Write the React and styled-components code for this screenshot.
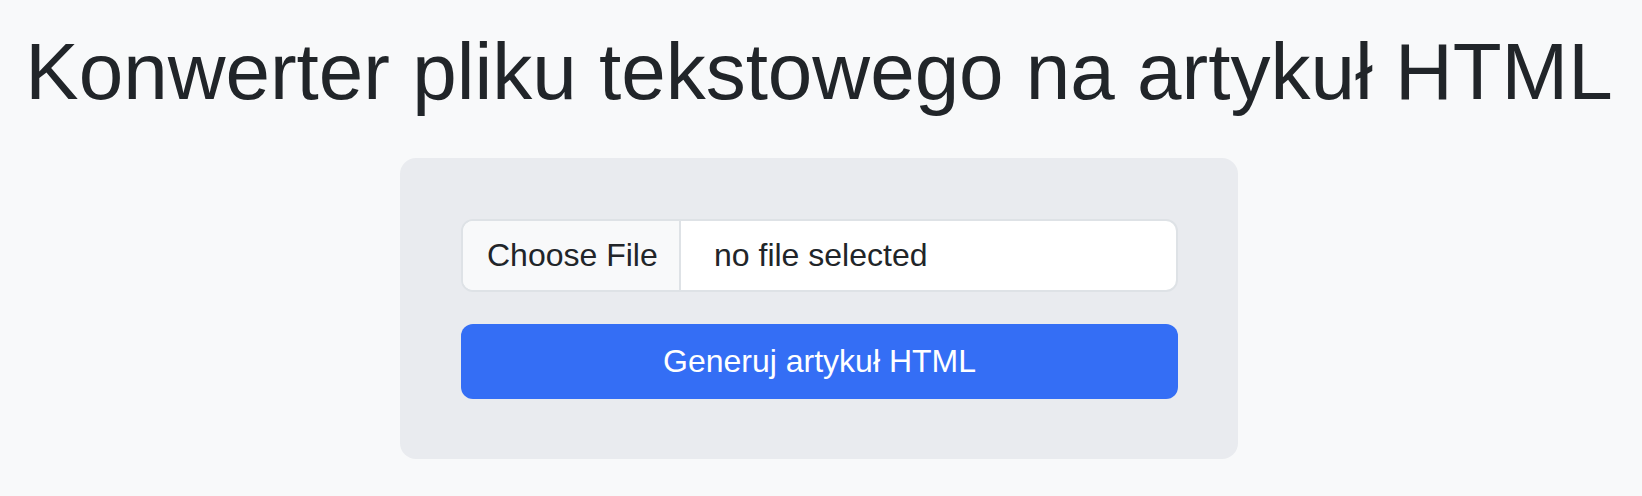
import React, { useState } from "react";
import styled, { createGlobalStyle } from "styled-components";

const GlobalStyle = createGlobalStyle`
  html, body {
    margin: 0;
    padding: 0;
    background-color: #f8f9fa;
    color: #212529;
    font-family: "Liberation Sans", Arial, Helvetica, sans-serif;
  }
`;

const Page = styled.div`
  display: flex;
  flex-direction: column;
  align-items: center;
  padding: 24px 4px 0 0;
`;

const Title = styled.h1`
  margin: 0 0 38px;
  font-size: 80px;
  font-weight: normal;
  line-height: 96px;
  text-align: center;
  white-space: nowrap;
  color: #212529;
`;

const Card = styled.form`
  box-sizing: border-box;
  width: 838px;
  padding: 61px 60px 60px 61px;
  background-color: #e9ebef;
  border-radius: 16px;
  display: flex;
  flex-direction: column;
  gap: 32px;
`;

const FileField = styled.label`
  box-sizing: border-box;
  display: flex;
  align-items: stretch;
  height: 73px;
  background-color: #ffffff;
  border: 2px solid #dee2e6;
  border-radius: 12px;
  overflow: hidden;
  font-size: 32px;
  white-space: nowrap;
  cursor: pointer;
`;

const HiddenInput = styled.input`
  display: none;
`;

const ChooseButton = styled.span`
  flex: 0 0 218px;
  display: flex;
  align-items: center;
  padding-left: 24px;
  box-sizing: border-box;
  background-color: #f8f9fa;
  border-right: 2px solid #dee2e6;
  color: #212529;
`;

const FileName = styled.span`
  display: flex;
  align-items: center;
  padding-left: 33px;
  color: #212529;
`;

const SubmitButton = styled.button`
  height: 75px;
  border: none;
  border-radius: 12px;
  background-color: #346ef5;
  color: #ffffff;
  font-family: inherit;
  font-size: 32px;
  cursor: pointer;
`;

export default function App() {
  const [fileName, setFileName] = useState("");

  return (
    <Page>
      <GlobalStyle />
      <Title>Konwerter pliku tekstowego na artykuł HTML</Title>
      <Card onSubmit={(e) => e.preventDefault()}>
        <FileField>
          <HiddenInput
            type="file"
            accept=".txt"
            onChange={(e) => setFileName(e.target.files[0] ? e.target.files[0].name : "")}
          />
          <ChooseButton>Choose File</ChooseButton>
          <FileName>{fileName || "no file selected"}</FileName>
        </FileField>
        <SubmitButton type="submit">Generuj artykuł HTML</SubmitButton>
      </Card>
    </Page>
  );
}
